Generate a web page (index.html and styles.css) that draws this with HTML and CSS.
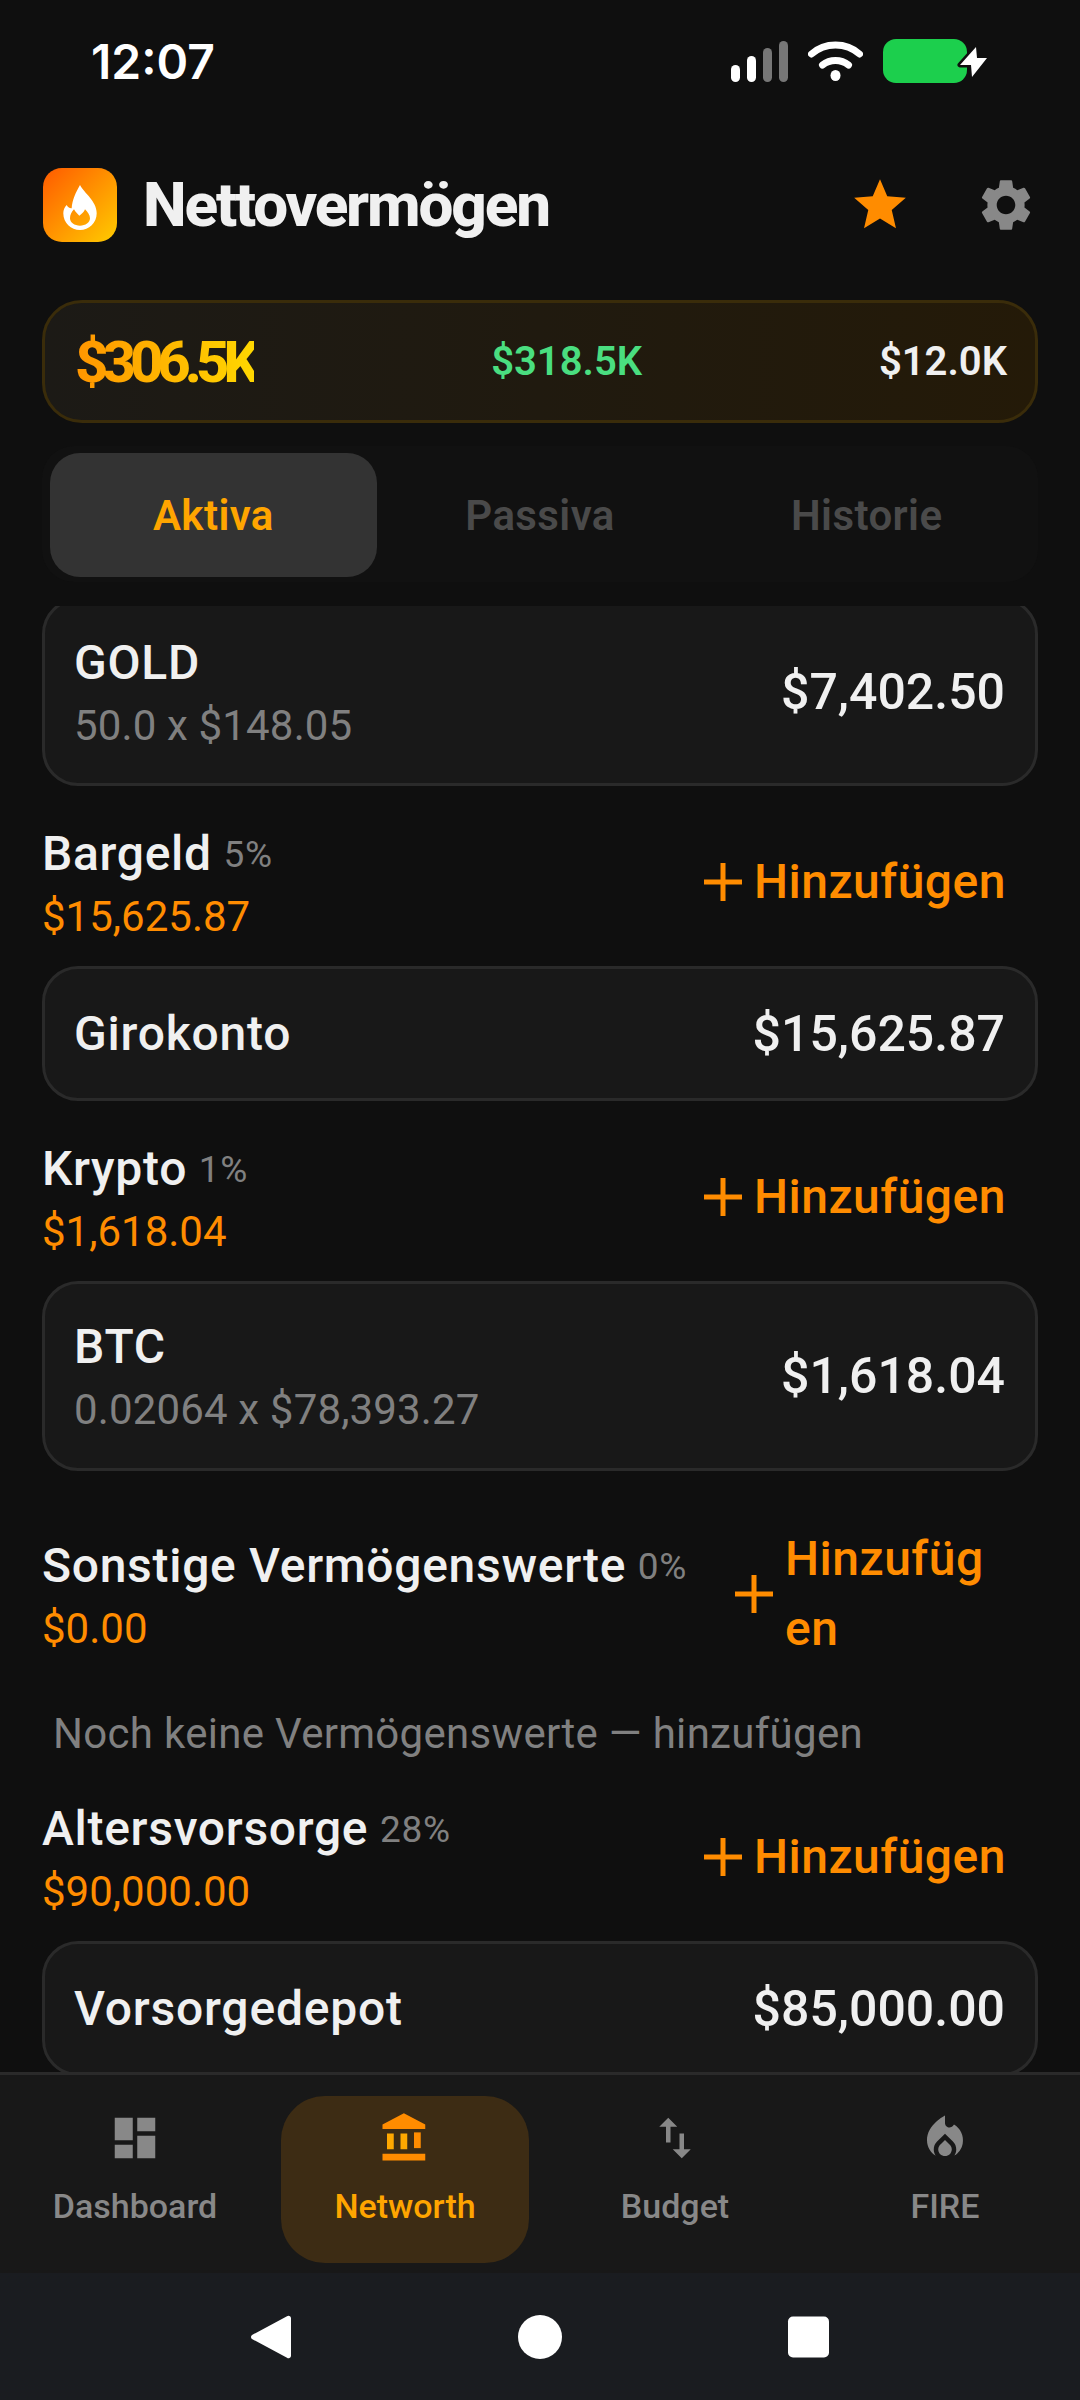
FILE: index.html
```html
<!DOCTYPE html>
<html lang="de">
<head>
<meta charset="utf-8">
<title>Nettovermögen</title>
<link rel="stylesheet" href="styles.css">
</head>
<body>
<div class="app">
  <div class="status">
    <span class="time">12:07</span>
    <div class="status-icons">
      <svg class="sig" viewBox="0 0 57 41"><rect x="0" y="24" width="9" height="17" rx="4.500" fill="#fff"/><rect x="16" y="15" width="9" height="26" rx="4.500" fill="#fff"/><rect x="32" y="7" width="9" height="34" rx="4.500" fill="#777"/><rect x="48" y="0" width="9" height="41" rx="4.500" fill="#777"/></svg>
      <svg class="wifi" viewBox="0 0 55 40"><path d="M3.500 13C17 1 38 1 51.500 13" fill="none" stroke="#fff" stroke-width="7" stroke-linecap="round"/><path d="M14.500 24C22 18 33 18 40.500 24" fill="none" stroke="#fff" stroke-width="7" stroke-linecap="round"/><ellipse cx="27.500" cy="34.500" rx="5" ry="5.500" fill="#fff"/></svg>
      <svg class="batt" viewBox="0 0 104 44"><rect x="0" y="0" width="84" height="44" rx="13" fill="#1ccf4d"/><path d="M93 8L77 26H88L89 38L104 19H94Z" fill="#fff" stroke="#0f0f0f" stroke-width="5" paint-order="stroke" stroke-linejoin="round"/></svg>
    </div>
  </div>

  <header class="head">
    <svg class="logo" viewBox="0 0 74 74"><defs><linearGradient id="lg" x1="0" y1="0" x2="1" y2="1"><stop offset="0" stop-color="#ff5a00"/><stop offset="1" stop-color="#ffcc00"/></linearGradient></defs><rect width="74" height="74" rx="19" fill="url(#lg)"/><path fill="#fff" fill-rule="evenodd" d="M37 17C41 25 53.700 33 53.700 45.300C53.700 55 46 62 37 62C28 62 20.300 55 20.300 45.300C20.300 42 21.500 39 23.700 37C24.500 39 26.500 40.500 28.700 40.300C29 32 33 24 37 17ZM31 41.300C28.500 44 27 47 27 50.300C27 54.700 31.500 57.700 37 57.700C42.500 57.700 47 54.700 47 50.300C47 47 44.500 44 42 41.300C41 44 38.800 46 36.300 47.700C34.500 46 32.500 44 31 41.300Z"/></svg>
    <h1 class="title">Nettovermögen</h1>
    <div class="head-actions">
      <svg class="hicon star" viewBox="0 0 24 24"><path d="M12 17.270L18.180 21l-1.640-7.030L22 9.240l-7.190-.61L12 2 9.190 8.630 2 9.240l5.460 4.730L5.820 21z"/></svg>
      <svg class="hicon gear" viewBox="0 0 24 24"><path d="M19.140 12.940c.04-.3.06-.61.06-.94 0-.32-.02-.64-.07-.94l2.030-1.580c.18-.14.23-.41.12-.61l-1.920-3.320c-.12-.22-.37-.29-.59-.22l-2.390.96c-.5-.38-1.030-.7-1.620-.94l-.36-2.540c-.04-.24-.24-.41-.48-.41h-3.840c-.24 0-.43.17-.47.41l-.36 2.540c-.59.24-1.130.57-1.620.94l-2.390-.96c-.22-.08-.47 0-.59.22L2.740 8.870c-.12.21-.08.47.12.61l2.030 1.580c-.05.3-.09.63-.09.94s.02.64.07.94l-2.030 1.580c-.18.14-.23.41-.12.61l1.920 3.320c.12.22.37.29.59.22l2.390-.96c.5.38 1.030.7 1.620.94l.36 2.540c.05.24.24.41.48.41h3.840c.24 0 .44-.17.47-.41l.36-2.540c.59-.24 1.130-.56 1.620-.94l2.390.96c.22.08.47 0 .59-.22l1.920-3.320c.12-.22.07-.47-.12-.61l-2.010-1.580zM12 15.600c-1.980 0-3.600-1.620-3.600-3.600s1.620-3.600 3.600-3.600 3.600 1.620 3.600 3.600-1.620 3.600-3.600 3.600z"/></svg>
    </div>
  </header>

  <section class="summary">
    <span class="sum-net">$306.5K</span>
    <span class="sum-assets">$318.5K</span>
    <span class="sum-debt">$12.0K</span>
  </section>

  <nav class="tabs">
    <div class="tab tab-on">Aktiva</div>
    <div class="tab">Passiva</div>
    <div class="tab">Historie</div>
  </nav>

  <main class="list">
    <div class="list-inner">
      <div class="card card-tall card-first">
        <div><div class="name">GOLD</div><div class="sub">50.0 x $148.05</div></div>
        <div class="value">$7,402.50</div>
      </div>

      <div class="group">
        <div><div class="g-title">Bargeld <span class="pct">5%</span></div><div class="g-sum">$15,625.87</div></div>
        <div class="add"><svg class="plus" viewBox="0 0 38 38"><path d="M16.500 0h5v16.500H38v5H21.500V38h-5V21.500H0v-5h16.500z"/></svg><span>Hinzufügen</span></div>
      </div>
      <div class="card"><div class="name">Girokonto</div><div class="value">$15,625.87</div></div>

      <div class="group">
        <div><div class="g-title">Krypto <span class="pct">1%</span></div><div class="g-sum">$1,618.04</div></div>
        <div class="add"><svg class="plus" viewBox="0 0 38 38"><path d="M16.500 0h5v16.500H38v5H21.500V38h-5V21.500H0v-5h16.500z"/></svg><span>Hinzufügen</span></div>
      </div>
      <div class="card card-tall">
        <div><div class="name">BTC</div><div class="sub">0.02064 x $78,393.27</div></div>
        <div class="value">$1,618.04</div>
      </div>

      <div class="group group-wrap">
        <div><div class="g-title">Sonstige Vermögenswerte <span class="pct">0%</span></div><div class="g-sum">$0.00</div></div>
        <div class="add add-wrap"><svg class="plus" viewBox="0 0 38 38"><path d="M16.500 0h5v16.500H38v5H21.500V38h-5V21.500H0v-5h16.500z"/></svg><span>Hinzufügen</span></div>
      </div>
      <div class="empty">Noch keine Vermögenswerte — hinzufügen</div>

      <div class="group group-last">
        <div><div class="g-title">Altersvorsorge <span class="pct">28%</span></div><div class="g-sum">$90,000.00</div></div>
        <div class="add"><svg class="plus" viewBox="0 0 38 38"><path d="M16.500 0h5v16.500H38v5H21.500V38h-5V21.500H0v-5h16.500z"/></svg><span>Hinzufügen</span></div>
      </div>
      <div class="card"><div class="name">Vorsorgedepot</div><div class="value">$85,000.00</div></div>
    </div>
  </main>

  <nav class="bottom">
    <div class="item">
      <svg class="nicon" viewBox="0 0 24 24"><path d="M3 13h8V3H3v10zm0 8h8v-6H3v6zm10 0h8V11h-8v10zm0-18v6h8V3h-8z"/></svg>
      <span>Dashboard</span>
    </div>
    <div class="item item-on">
      <svg class="nicon" viewBox="0 0 24 24"><path d="M2 22h19v-3H2v3zM11.500 1L2 6v2h19V6l-9.500-5z"/><path fill="#ffa800" d="M4 10v7h3v-7H4zm6 0v7h3v-7h-3z"/><path d="M16 9.500v7h3v-7h-3z"/></svg>
      <span>Networth</span>
    </div>
    <div class="item">
      <svg class="nicon" viewBox="0 0 24 24"><path d="M16 17.010V10h-2v7.010h-3L15 21l4-3.990h-3zM9 3L5 6.990h3V14h2V6.990h3L9 3z"/></svg>
      <span>Budget</span>
    </div>
    <div class="item">
      <svg class="nicon" viewBox="0 0 24 24"><path d="M12 12.900l-2.130 2.090C9.310 15.550 9 16.280 9 17.060 9 18.680 10.350 20 12 20s3-1.320 3-2.940c0-.78-.31-1.520-.87-2.070L12 12.900z"/><path d="M16 6l-.44.55C14.380 8.020 12 7.190 12 5.300V2S4 6 4 13c0 2.920 1.560 5.470 3.890 6.860-.56-.79-.89-1.760-.89-2.800 0-1.320.52-2.560 1.470-3.500L12 10.100l3.530 3.470c.95.93 1.470 2.170 1.470 3.500 0 1.020-.31 1.960-.85 2.750 1.890-1.150 3.290-3.060 3.710-5.300.66-3.550-1.070-6.900-3.860-8.520z"/></svg>
      <span>FIRE</span>
    </div>
  </nav>

  <div class="sysnav">
    <svg class="sys" viewBox="0 0 44 44"><path d="M42 3v38a2.500 2.500 0 0 1-4 1.700L3 24a2.500 2.500 0 0 1 0-4L38 1.300A2.500 2.500 0 0 1 42 3z" fill="#fff"/></svg>
    <svg class="sys" viewBox="0 0 44 44"><circle cx="22" cy="22" r="22" fill="#fff"/></svg>
    <svg class="sys" viewBox="0 0 44 44"><rect x="1" y="1.500" width="41" height="41" rx="5" fill="#fff"/></svg>
  </div>
</div>
</body>
</html>
```
FILE: styles.css
```css
* { box-sizing: border-box; }
html, body { margin: 0; padding: 0; }
body { background: #0f0f0f; font-family: Roboto, "Noto Sans", sans-serif; color: #f0f0f0; }
.app { width: 1080px; height: 2400px; display: flex; flex-direction: column; overflow: hidden; background: #0f0f0f; }

.status { height: 120px; flex: none; display: flex; justify-content: space-between; align-items: center; padding: 2px 93px 0 91px; }
.time { font-family: Inter, Roboto, sans-serif; font-size: 48px; font-weight: 600; color: #fff; }
.status-icons { display: flex; align-items: center; gap: 20px; }
.sig { width: 57px; height: 41px; }
.wifi { width: 55px; height: 40px; }
.batt { width: 104px; height: 44px; }

.head { height: 120px; flex: none; margin-top: 25px; display: flex; align-items: center; padding: 0 43px; }
.logo { width: 74px; height: 74px; flex: none; }
.title { margin: 0 0 2px 26px; font-size: 62px; font-weight: 800; letter-spacing: -2.15px; color: #f0f0f0; flex: 1; }
.head-actions { display: flex; gap: 64px; }
.hicon { width: 62px; height: 62px; display: block; }
.star { fill: #ff8c00; }
.gear { fill: #888; }

.summary { flex: none; margin: 35px 42px 0; height: 123px; border: 3px solid #3a2c0a; border-radius: 40px; padding: 0 28px 0 30px; display: flex; align-items: center; justify-content: space-between; background: linear-gradient(90deg, #1c1a16, #241a08); }
.sum-net { font-size: 58px; font-weight: 800; letter-spacing: -6px; background: linear-gradient(90deg, #ff9500, #ffd700); -webkit-background-clip: text; background-clip: text; color: transparent; }
.sum-assets { font-size: 40px; font-weight: 600; color: #4ade80; }
.sum-debt { font-size: 40px; font-weight: 600; color: #f0f0f0; }

.tabs { flex: none; margin: 23px 42px 0; height: 136px; padding: 7px 8px; border-radius: 32px; background: #111; display: flex; }
.tab { flex: 1; height: 124px; border-radius: 30px; display: flex; align-items: center; justify-content: center; font-size: 42px; font-weight: 600; letter-spacing: .4px; color: #4a4a4a; }
.tab-on { background: #333; color: #ffa500; }

.list { flex: 1; min-height: 0; margin-top: 24px; overflow: hidden; }
.list-inner { padding: 0 42px; margin-top: -8px; }
.card { background: #181818; border: 3px solid #2a2a2a; border-radius: 36px; display: flex; align-items: center; justify-content: space-between; padding: 0 30px 0 29px; height: 135px; }
.card-tall { height: 190px; }
.card-first { height: 188px; }
.name { font-size: 48px; font-weight: 500; letter-spacing: .8px; color: #f0f0f0; line-height: 60px; }
.sub { font-size: 42px; color: #808080; letter-spacing: .15px; line-height: 50px; margin-top: 8px; }
.value { font-size: 50px; font-weight: 500; color: #f0f0f0; }

.group { display: flex; align-items: center; justify-content: space-between; margin-top: 38px; height: 115px; margin-bottom: 27px; }
.group-wrap { height: 140px; margin-top: 53px; margin-bottom: 0; }
.group-last { margin-top: 35px; }
.g-title { font-size: 48px; font-weight: 500; letter-spacing: .7px; color: #f0f0f0; line-height: 60px; white-space: nowrap; }
.pct { font-size: 37px; font-weight: 400; color: #808080; letter-spacing: .8px; margin-left: -1px; vertical-align: 3px; }
.g-sum { font-size: 42px; color: #ff8c00; line-height: 46px; margin-top: 9px; }
.add { display: flex; align-items: center; gap: 12px; padding-right: 32px; font-size: 48px; font-weight: 500; letter-spacing: .5px; color: #ff8c00; }
.add-wrap { width: 303px; flex: none; line-height: 70px; overflow-wrap: anywhere; }
.add-wrap span { min-width: 0; flex: 1; }
.plus { width: 38px; height: 38px; flex: none; fill: #ff8c00; }
.empty { font-size: 42px; color: #808080; letter-spacing: .3px; padding: 0 11px; margin-top: 40px; line-height: 60px; }

.bottom { flex: none; height: 201px; border-top: 3px solid #2a2a2a; background: #181818; display: flex; align-items: flex-start; padding-top: 21px; }
.item { flex: 1; height: 167px; margin: 0 11px; display: flex; flex-direction: column; align-items: center; color: #888; font-size: 34px; font-weight: 500; padding-top: 15px; border-radius: 44px; }
.item-on { background: #3d2c14; color: #ffa500; }
.nicon { width: 54px; height: 54px; fill: currentColor; margin-bottom: 21px; flex: none; }
.item-on .nicon { fill: #ff8c00; }

.sysnav { flex: none; height: 127px; background: #1a1c20; display: flex; align-items: center; justify-content: center; gap: 225px; }
.sys { width: 44px; height: 44px; }
```
